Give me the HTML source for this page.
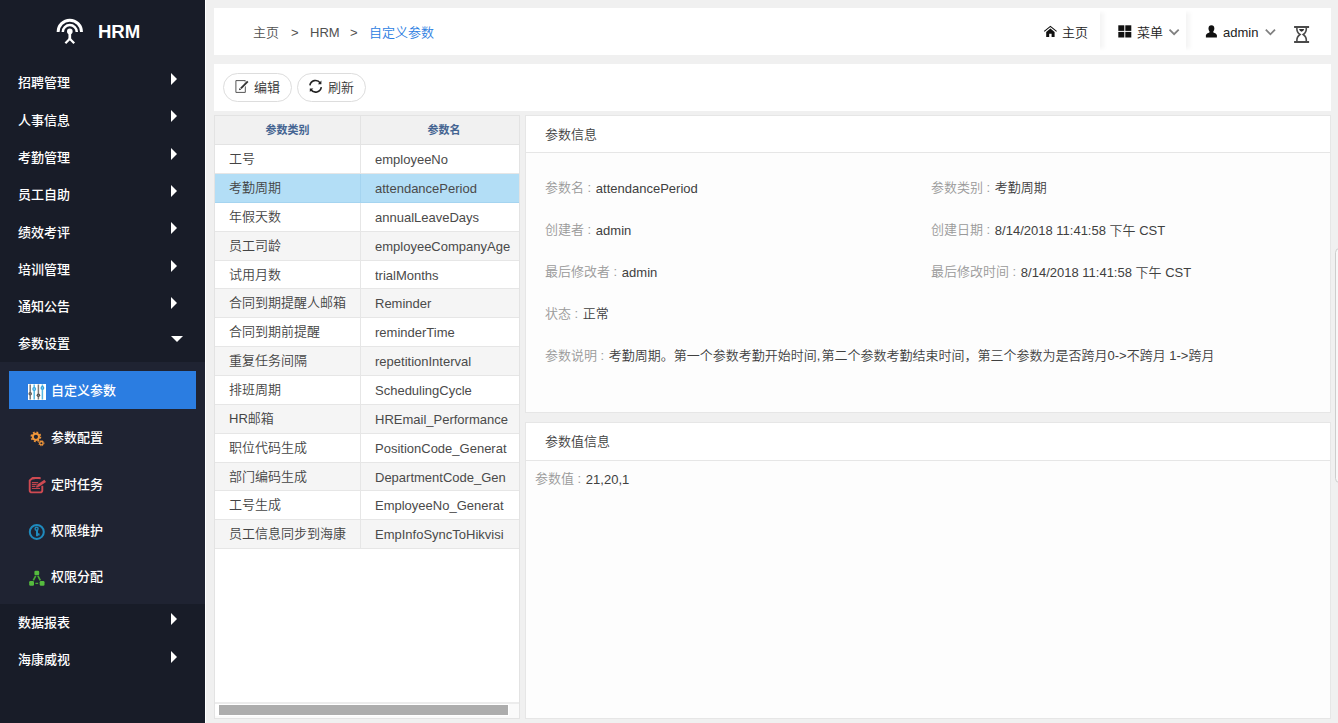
<!DOCTYPE html>
<html lang="zh-CN">
<head>
<meta charset="utf-8">
<title>HRM - 自定义参数</title>
<style>
*{box-sizing:border-box;margin:0;padding:0}
html,body{width:1338px;height:723px;overflow:hidden}
body{position:relative;background:#f0f0f0;font-family:"Liberation Sans","Noto Sans CJK SC",sans-serif;font-size:13px;color:#333;font-weight:350}
.abs{position:absolute}
#side{position:absolute;left:0;top:0;width:205px;height:723px;background:#181c28}
#sideline{position:absolute;left:205px;top:0;width:1px;height:723px;background:#fff}
.logo-t{position:absolute;left:98px;top:21px;font-size:18.6px;font-weight:bold;color:#fff;line-height:22px;letter-spacing:-0.1px}
.mi{position:absolute;left:18px;width:180px;height:20px;line-height:20px;color:#fff;font-weight:500;font-size:13px;white-space:nowrap}
.arr{position:absolute;left:171px;width:0;height:0;border-left:6px solid #fff;border-top:6px solid transparent;border-bottom:6px solid transparent}
.arrd{position:absolute;left:171px;width:0;height:0;border-top:6px solid #fff;border-left:6px solid transparent;border-right:6px solid transparent}
#sub{position:absolute;left:0;top:362px;width:205px;height:242px;background:#1f2332}
.si{position:absolute;left:51px;height:20px;line-height:20px;color:#fff;font-weight:500;font-size:13px;white-space:nowrap}
#act{position:absolute;left:9px;top:371px;width:187px;height:38px;background:#2b7de1}
#hdr{position:absolute;left:214px;top:8px;width:1117px;height:47px;background:#fff}
.bc{position:absolute;top:23px;height:20px;line-height:20px;font-size:13px;color:#505050;white-space:nowrap}
#tb{position:absolute;left:214px;top:64px;width:1117px;height:47px;background:#fff}
.btn{position:absolute;top:73px;height:29px;border:1px solid #ddd;border-radius:15px;background:#fff;font-size:13px;line-height:27px;color:#333;white-space:nowrap}
#grid{position:absolute;left:214px;top:115px;width:306px;height:604px;background:#fff;border:1px solid #e3e3e3}
.th{position:absolute;top:115px;height:30px;background:#f1f1f1;border:1px solid #e3e3e3;color:#456592;font-weight:bold;font-size:11px;text-align:center;line-height:28px}
.row{position:absolute;left:215px;width:304px;border-bottom:1px solid #e6e6e6;background:#fff}
.row.alt{background:#f5f5f5}
.row.sel{background:#b3def6;border-bottom-color:#a5d4f0}
.row .c1{position:absolute;left:14px;top:0;white-space:nowrap;color:#444;font-size:13px}
.row .c2{position:absolute;left:160px;top:1px;white-space:nowrap;color:#4a4a4a;font-size:13px;width:144px;overflow:hidden}
.row .dv{position:absolute;left:145px;top:0;bottom:0;width:1px;background:#e6e6e6}
.row.sel .dv{background:#a5d4f0}
.pn{position:absolute;left:525px;width:806px;background:#fdfdfd;border:1px solid #e6e6e6}
.pt{position:absolute;left:0;top:0;right:0;background:#fff;border-bottom:1px solid #e6e6e6}
.t{position:absolute;white-space:nowrap;height:20px;line-height:20px;font-size:13px;color:#404040}
.t i{font-style:normal;color:#999;margin-right:1px}
.t i.u{position:relative;top:-1px}
</style>
</head>
<body>
<div id="side"></div>
<div id="sideline"></div>
<div id="sub"></div>
<div id="act"></div>

<svg class="abs" style="left:56px;top:17px" width="30" height="30" viewBox="0 0 30 30" fill="none" stroke="#fff" stroke-linecap="butt">
<path d="M2.1 14.9 A11.7 11.7 0 0 1 25.5 14.9" stroke-width="2.9"/>
<path d="M6.8 15.1 A7 7 0 0 1 20.8 15.1" stroke-width="2.5"/>
<circle cx="13.8" cy="14.4" r="2.8" fill="#fff" stroke="none"/>
<path d="M13.8 15 V22.4" stroke-width="2.7"/><path d="M14.3 21.3 L9.4 26.2 M13.3 21.3 L18.2 26.2" stroke-width="2.3"/>
</svg>
<div class="logo-t">HRM</div>
<div class="mi" style="top:73.45px">招聘管理</div><div class="arr" style="top:73px"></div>
<div class="mi" style="top:110.73px">人事信息</div><div class="arr" style="top:110px"></div>
<div class="mi" style="top:148.01px">考勤管理</div><div class="arr" style="top:148px"></div>
<div class="mi" style="top:185.29px">员工自助</div><div class="arr" style="top:185px"></div>
<div class="mi" style="top:222.57px">绩效考评</div><div class="arr" style="top:222px"></div>
<div class="mi" style="top:259.85px">培训管理</div><div class="arr" style="top:260px"></div>
<div class="mi" style="top:297.13px">通知公告</div><div class="arr" style="top:297px"></div>
<div class="mi" style="top:334.41px">参数设置</div><div class="arrd" style="top:336px"></div>
<div class="si" style="top:381.4px">自定义参数</div>
<div class="si" style="top:428.2px">参数配置</div>
<div class="si" style="top:475px">定时任务</div>
<div class="si" style="top:521.3px">权限维护</div>
<div class="si" style="top:567.2px">权限分配</div>
<div class="mi" style="top:612.9px">数据报表</div><div class="arr" style="top:613px"></div>
<div class="mi" style="top:650.4px">海康威视</div><div class="arr" style="top:651px"></div>
<svg class="abs" style="left:28px;top:384px" width="18" height="16" viewBox="0 0 18 16">
<rect width="18" height="16" fill="#fff"/>
<g stroke-width="1.5" fill="none"><path d="M2.2 0.6V15.4M10.4 0.6V15.4" stroke="#7a7a7a"/><path d="M6.2 0.6V15.4M14.4 0.6V15.4" stroke="#55b8e4"/></g>
<circle cx="2.2" cy="9.8" r="1.8" fill="#5e5e5e"/><circle cx="6.2" cy="5.1" r="2" fill="#3aa9e2"/><circle cx="10.4" cy="11.3" r="1.8" fill="#555"/><circle cx="14.4" cy="3.9" r="1.9" fill="#2f9fdc"/>
<circle cx="6.2" cy="5.1" r="0.8" fill="#9bd6f2"/><circle cx="14.4" cy="3.9" r="0.7" fill="#9bd6f2"/><circle cx="10.4" cy="11.3" r="0.6" fill="#999"/><circle cx="2.2" cy="9.8" r="0.6" fill="#999"/>
</svg>
<svg class="abs" style="left:29px;top:430px" width="18" height="18" viewBox="0 0 18 18" fill="none" stroke="#f0963a">
<circle cx="6.9" cy="6.8" r="3.1" stroke-width="2"/>
<circle cx="6.9" cy="6.8" r="4.6" stroke-width="1.6" stroke-dasharray="1.8 1.81"/>
<circle cx="12.4" cy="13.2" r="1.7" stroke-width="1.3"/>
<circle cx="12.4" cy="13.2" r="2.6" stroke-width="1" stroke-dasharray="1 1.04"/>
</svg>
<svg class="abs" style="left:28px;top:476px" width="19" height="19" viewBox="0 0 19 19" fill="none" stroke="#cf4a52">
<path d="M12.6 2.6 L11.6 2 H4.6 L1.7 4.4 V14.2 A2.2 2.2 0 0 0 3.9 16.4 H12.1 A2.2 2.2 0 0 0 14.3 14.2 V9.8" stroke-width="1.9" stroke-linejoin="round"/>
<path d="M4.2 3.4 H6.6 V2.6 H4.2Z" fill="#cf4a52" stroke="none"/>
<path d="M3.9 6.6H10.2M3.9 8.5H8.6M3.9 10.4H7.4M3.9 12.5H12" stroke-width="1.1" stroke="#c0444c"/>
<path d="M17.2 4.9 L9.8 9.9" stroke-width="2.9"/>
<path d="M7.9 11.6 L8.9 8.8 L10.9 11.2Z" fill="#cf4a52" stroke="none"/>
</svg>
<svg class="abs" style="left:28px;top:523px" width="18" height="18" viewBox="0 0 18 18" fill="none">
<circle cx="8.8" cy="8.9" r="7" stroke="#1f8abd" stroke-width="2"/>
<circle cx="8.6" cy="5.8" r="1.5" stroke="#1f8abd" stroke-width="1.4"/>
<path d="M9 7V13.2" stroke="#1f8abd" stroke-width="2"/>
<path d="M9.4 10 L11.6 10.4 V12.4 H9.4Z" fill="#1f8abd"/>
</svg>
<svg class="abs" style="left:28px;top:569px" width="18" height="18" viewBox="0 0 18 18">
<path d="M7.7 6.9 L5.3 11.4 M9.9 6.9 L12.3 11.4" fill="none" stroke="#47aa34" stroke-width="1.7"/>
<path d="M7.4 14.4 H10.2" fill="none" stroke="#47aa34" stroke-width="1.3"/>
<rect x="6.4" y="1.7" width="4.8" height="4.6" rx="1.2" fill="#55bb3e"/>
<rect x="1.2" y="12" width="4.8" height="4.8" rx="1.2" fill="#55bb3e"/>
<rect x="11.7" y="12" width="4.8" height="4.8" rx="1.2" fill="#55bb3e"/>
</svg>

<div id="hdr"></div>
<div class="bc" style="left:253px">主页</div>
<div class="bc" style="left:291px">&gt;</div>
<div class="bc" style="left:310px">HRM</div>
<div class="bc" style="left:350px">&gt;</div>
<div class="bc" style="left:369px;color:#2b7de1">自定义参数</div>

<div class="bc" style="left:1062px;color:#222">主页</div>
<div class="bc" style="left:1137px;color:#222">菜单</div>
<div class="bc" style="left:1223px;color:#222">admin</div>

<div class="abs" style="left:1100px;top:10px;width:7px;height:41px;background:linear-gradient(to right,rgba(0,0,0,.045),rgba(0,0,0,0));-webkit-mask-image:linear-gradient(to bottom,transparent,#000 12%,#000 88%,transparent);mask-image:linear-gradient(to bottom,transparent,#000 12%,#000 88%,transparent)"></div>
<div class="abs" style="left:1186px;top:10px;width:7px;height:41px;background:linear-gradient(to right,rgba(0,0,0,.045),rgba(0,0,0,0));-webkit-mask-image:linear-gradient(to bottom,transparent,#000 12%,#000 88%,transparent);mask-image:linear-gradient(to bottom,transparent,#000 12%,#000 88%,transparent)"></div>
<svg class="abs" style="left:1043px;top:25px" width="15" height="13" viewBox="0 0 15 13">
<path d="M1.2 6.4 L7.4 1.4 L13.6 6.4" fill="none" stroke="#111" stroke-width="1.1"/>
<path d="M7.4 3.6 L3.2 7 V12 H6.2 V8.8 H8.6 V12 H11.6 V7Z" fill="#111"/>
</svg>
<svg class="abs" style="left:1118px;top:25px" width="14" height="13" viewBox="0 0 14 13" fill="#111">
<rect x="0.3" y="0.3" width="6" height="5.6"/><rect x="7.3" y="0.3" width="6" height="5.6"/><rect x="0.3" y="6.9" width="6" height="5.6"/><rect x="7.3" y="6.9" width="6" height="5.6"/>
</svg>
<svg class="abs" style="left:1168px;top:28px" width="12" height="8" viewBox="0 0 12 8" fill="none" stroke="#808080" stroke-width="1.8"><path d="M1.5 1.6 L6.1 6.2 L10.7 1.6"/></svg>
<svg class="abs" style="left:1205px;top:25px" width="13" height="13" viewBox="0 0 13 13" fill="#111">
<ellipse cx="6.4" cy="3.4" rx="2.9" ry="3.2"/>
<path d="M4.6 5.6 L4.4 7.4 Q1.6 8.2 0.9 10 V12.6 H11.9 V10 Q11.2 8.2 8.4 7.4 L8.2 5.6Z"/>
</svg>
<svg class="abs" style="left:1264px;top:28px" width="12" height="8" viewBox="0 0 12 8" fill="none" stroke="#808080" stroke-width="1.8"><path d="M1.8 1.7 L6.4 6.3 L11 1.7"/></svg>
<svg class="abs" style="left:1293px;top:25px" width="17" height="19" viewBox="0 0 17 19" fill="none" stroke="#4a4a4a">
<path d="M1.1 2.1 H16.1 M1.1 16.9 H16.1" stroke-width="2"/>
<path d="M3.9 2.6 C3.5 6.6 5.2 8.3 7 9.5 C5.2 10.7 3.5 12.4 3.9 16.4 M13.3 2.6 C13.7 6.6 12 8.3 10.2 9.5 C12 10.7 13.7 12.4 13.3 16.4" stroke-width="1.6"/>
<path d="M6 4.1 H11.2 Q10.7 6.5 8.6 6.7 Q6.5 6.5 6 4.1Z" fill="#333" stroke="none"/>
</svg>
<div id="tb"></div>
<div class="btn" style="left:223px;width:69px"><span style="position:absolute;left:30px;top:0">编辑</span></div>
<svg class="abs" style="left:235px;top:79px" width="15" height="15" viewBox="0 0 15 15" fill="none" stroke="#333"><path d="M0.9 1.6 H10.3 V13.4 H0.9Z" stroke-width="1" stroke="#555"/><path d="M13.2 2.2 L5.6 9.8" stroke-width="3.4" stroke="#fff"/><path d="M12.8 2.4 L5.9 9.4" stroke-width="1.9"/><path d="M3.9 11.3 L4.6 8.9 L6.3 10.5Z" fill="#333" stroke="none"/></svg>
<div class="btn" style="left:297px;width:69px"><span style="position:absolute;left:30px;top:0">刷新</span></div>
<svg class="abs" style="left:308px;top:79px" width="15" height="15" viewBox="0 0 15 15" fill="none" stroke="#222" stroke-width="1.6"><path d="M1.9 6.4 A5.7 5.7 0 0 1 12.2 3.9"/><path d="M13.3 8.2 A5.7 5.7 0 0 1 3 10.7"/><path d="M13.4 1.6 V5.2 H9.9Z" fill="#222" stroke="none"/><path d="M1.8 13 V9.4 H5.3Z" fill="#222" stroke="none"/></svg>

<div id="grid"></div>
<div class="th" style="left:214px;width:147px">参数类别</div>
<div class="th" style="left:360px;width:160px;overflow:hidden"><span style="display:block;width:166px">参数名</span></div>

<div id="rows">
<div class="row" style="top:145px;height:29px;line-height:28px"><span class="c1">工号</span><span class="dv"></span><span class="c2">employeeNo</span></div>
<div class="row sel" style="top:174px;height:29px;line-height:28px"><span class="c1">考勤周期</span><span class="dv"></span><span class="c2">attendancePeriod</span></div>
<div class="row" style="top:203px;height:29px;line-height:28px"><span class="c1">年假天数</span><span class="dv"></span><span class="c2">annualLeaveDays</span></div>
<div class="row alt" style="top:232px;height:29px;line-height:28px"><span class="c1">员工司龄</span><span class="dv"></span><span class="c2">employeeCompanyAge</span></div>
<div class="row" style="top:261px;height:28px;line-height:27px"><span class="c1">试用月数</span><span class="dv"></span><span class="c2">trialMonths</span></div>
<div class="row alt" style="top:289px;height:29px;line-height:28px"><span class="c1">合同到期提醒人邮箱</span><span class="dv"></span><span class="c2">Reminder</span></div>
<div class="row" style="top:318px;height:29px;line-height:28px"><span class="c1">合同到期前提醒</span><span class="dv"></span><span class="c2">reminderTime</span></div>
<div class="row alt" style="top:347px;height:29px;line-height:28px"><span class="c1">重复任务间隔</span><span class="dv"></span><span class="c2">repetitionInterval</span></div>
<div class="row" style="top:376px;height:29px;line-height:28px"><span class="c1">排班周期</span><span class="dv"></span><span class="c2">SchedulingCycle</span></div>
<div class="row alt" style="top:405px;height:29px;line-height:28px"><span class="c1">HR邮箱</span><span class="dv"></span><span class="c2">HREmail_Performance</span></div>
<div class="row" style="top:434px;height:29px;line-height:28px"><span class="c1">职位代码生成</span><span class="dv"></span><span class="c2">PositionCode_Generat</span></div>
<div class="row alt" style="top:463px;height:28px;line-height:27px"><span class="c1">部门编码生成</span><span class="dv"></span><span class="c2">DepartmentCode_Gen</span></div>
<div class="row" style="top:491px;height:29px;line-height:28px"><span class="c1">工号生成</span><span class="dv"></span><span class="c2">EmployeeNo_Generat</span></div>
<div class="row alt" style="top:520px;height:29px;line-height:28px"><span class="c1">员工信息同步到海康</span><span class="dv"></span><span class="c2">EmpInfoSyncToHikvisi</span></div>
</div><!--rows-->

<div class="pn" style="top:115px;height:298px"><div class="pt" style="height:37px"></div></div>
<div class="pn" style="top:422px;height:297px"><div class="pt" style="height:38px"></div></div>

<div class="t" style="left:545px;top:125px">参数信息</div>
<div class="t" style="left:545px;top:179px"><i class="u">参数名 : </i>attendancePeriod</div>
<div class="t" style="left:931px;top:178px"><i>参数类别 : </i>考勤周期</div>
<div class="t" style="left:545px;top:221px"><i class="u">创建者 : </i>admin</div>
<div class="t" style="left:931px;top:221px"><i class="u">创建日期 : </i>8/14/2018 11:41:58 下午 CST</div>
<div class="t" style="left:545px;top:263px"><i class="u">最后修改者 : </i>admin</div>
<div class="t" style="left:931px;top:263px"><i class="u">最后修改时间 : </i>8/14/2018 11:41:58 下午 CST</div>
<div class="t" style="left:545px;top:304px"><i>状态 : </i>正常</div>
<div class="t" style="left:545px;top:346px"><i>参数说明 : </i>考勤周期。第一个参数考勤开始时间<span style="letter-spacing:1px">,</span>第二个参数考勤结束时间，第三个参数为是否跨月0-&gt;不跨月 1-&gt;跨月</div>

<div class="t" style="left:545px;top:432px">参数值信息</div>
<div class="t" style="left:535px;top:470px"><i class="u">参数值 : </i>21,20,1</div>

<div class="abs" style="left:215px;top:702px;width:304px;height:16px;background:#fafafa;border-top:2px solid #ececec"></div>
<div class="abs" style="left:215px;top:704px;width:294px;height:12px;background:#fff"></div>
<div class="abs" style="left:219px;top:705px;width:289px;height:10px;background:#adadad"></div>
<div class="abs" style="left:1335px;top:248px;width:9px;height:235px;border:1px solid #cdcdcd;border-radius:5px;background:#f8f8f8"></div>
</body>
</html>
